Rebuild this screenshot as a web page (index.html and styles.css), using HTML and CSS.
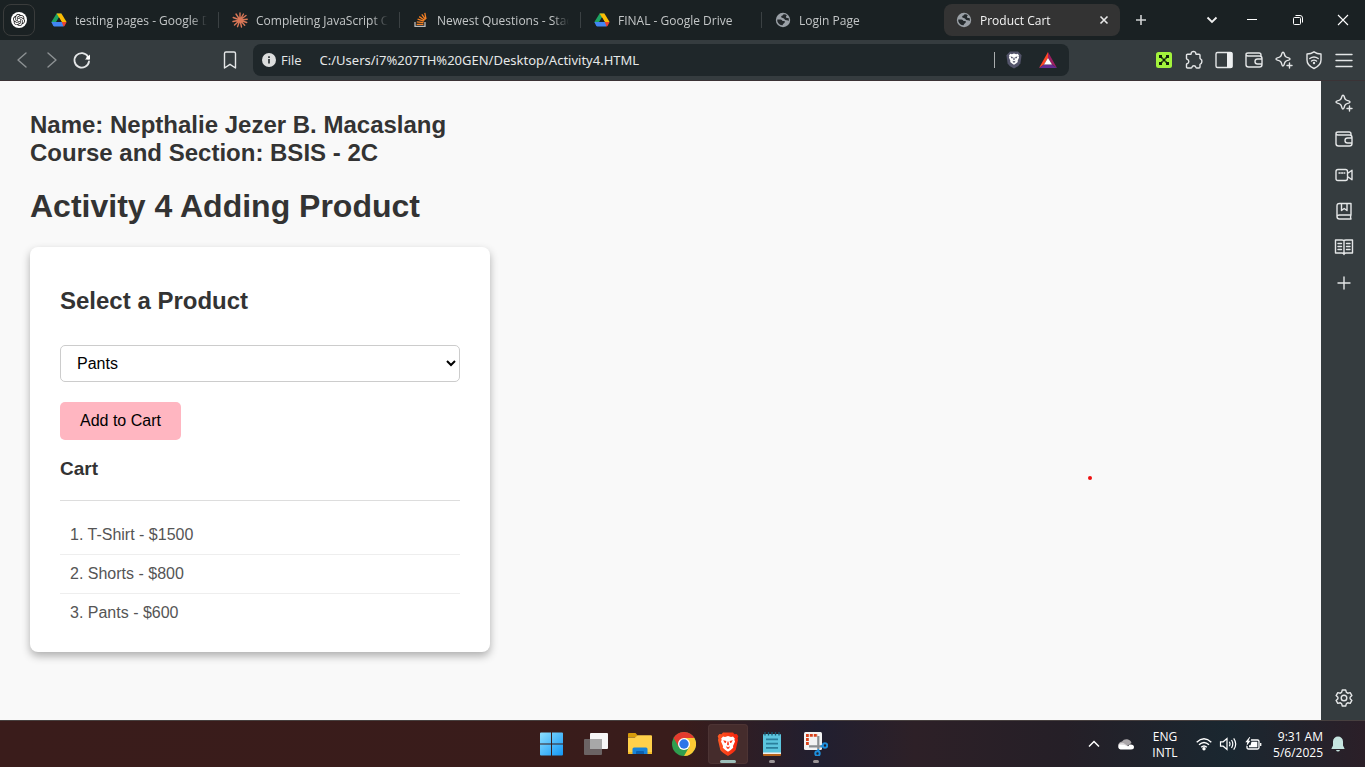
FILE: index.html
```html
<!DOCTYPE html>
<html lang="en">
<head>
<meta charset="utf-8">
<title>Product Cart</title>
<link rel="stylesheet" href="styles.css">
</head>
<body>
<svg class="defs" aria-hidden="true">
  <symbol id="drive" viewBox="0 0 16 16">
    <path fill="#1ea362" d="M5.6 1.5h4.8L5.5 9.6 3.1 14.2.4 9.9z"/>
    <path fill="#fbbc04" d="M5.6 1.5h4.8l5.2 8.4h-4.9z"/>
    <path fill="#4285f4" d="M.4 9.9h12.3l-.2 4.6H3.4q-.8 0-1.200-.8z"/>
    <path fill="#ea4335" d="M10.700 9.900h4.900l-1.900 3.800q-.4.800-1.200.800z"/>
    <path fill="#1a2123" d="M8 5.500l2.700 4.400H5.300z"/>
  </symbol>
  <symbol id="globe" viewBox="0 0 16 16">
    <circle cx="8" cy="8" r="7.200" fill="#9aa0a6"/>
    <path fill="#24292c" d="M2.300 7.600h3.200q1.700 0 2 1.500h2.200q.6 1.800-1 2.300-.9.300-1.100 1.900-3.700.2-5.300-4zM8.200 2.400q-.2 1.400-2 1.700-.4 1.900 1.500 2 1.500.1 2 1.300.5.900 1.900.8 1.300-.2 2.100.9.400-1.600-.2-3.200h-1.500q-1 0-1-1.200 0-1 .9-1.500-1.800-1.300-3.700-.8z"/>
  </symbol>
  <symbol id="sparkle" viewBox="0 0 20 20">
    <path class="line" d="M9 2.200q.8 0 1.100 1.100c.8 3.200 1.400 3.800 4.600 4.600q1.300.4 1.300 1.100t-1.300 1.100c-3.200.8-3.800 1.400-4.600 4.600q-.3 1.300-1.100 1.300t-1.100-1.300c-.8-3.200-1.400-3.800-4.600-4.600Q2 9.800 2 9t1.300-1.100c3.200-.8 3.800-1.400 4.600-4.600Q8.200 2.200 9 2.200z"/>
    <path class="halo" d="M15.500 12v7M12 15.500h7"/>
    <path class="line" d="M15.500 13v5M13 15.500h5"/>
  </symbol>
  <symbol id="wallet" viewBox="0 0 20 20">
    <path class="line" d="M2 5v9.500A2.500 2.500 0 0 0 4.500 17h11a2.500 2.500 0 0 0 2.500-2.500v-6A2.500 2.500 0 0 0 15.500 6H4a2 1.500 0 0 1 0-3h11q2 0 2 2v1M18 9h-4.500a2.500 2.500 0 0 0 0 5H18"/>
  </symbol>
  <symbol id="lion" viewBox="0 0 20 22">
    <path fill="#fff" d="M5 3.500l2 .6L10 3l3 1.100 2-.6 1.900 2.300-.6 1 .7 1.700-2 4.600.2 1.700-2.500 2.100L10 18.800l-2.700-1.900-2.500-2.100.2-1.700L3 8.500l.7-1.700-.6-1z"/>
    <path class="lionmark" d="M5.200 7.300l3.200.6-.6 2.200-1.200-.4zM14.800 7.300l-3.200.6.600 2.200 1.200-.4zM8 13.300l2 1 2-1-.8 2L10 16l-1.200-.7zM9.500 8.500h1l.5 3-1 1-1-1z"/>
  </symbol>
</svg>

<header class="browser">
  <div class="tabs">
    <button class="pinned" aria-label="ChatGPT">
      <svg width="16" height="16" viewBox="0 0 32 32"><circle cx="16" cy="16" r="16" fill="#fff"/><path transform="translate(4 4)" fill="#1b1b1b" d="M22.2819 9.8211a5.9847 5.9847 0 0 0-.5157-4.9108 6.0462 6.0462 0 0 0-6.5098-2.9A6.0651 6.0651 0 0 0 4.9807 4.1818a5.9847 5.9847 0 0 0-3.9977 2.9 6.0462 6.0462 0 0 0 .7427 7.0966 5.98 5.98 0 0 0 .511 4.9107 6.051 6.051 0 0 0 6.5146 2.9001A5.9847 5.9847 0 0 0 13.2599 24a6.0557 6.0557 0 0 0 5.7718-4.2058 5.9894 5.9894 0 0 0 3.9977-2.9001 6.0557 6.0557 0 0 0-.7475-7.0729zm-9.022 12.6081a4.4755 4.4755 0 0 1-2.8764-1.0408l.1419-.0804 4.7783-2.7582a.7948.7948 0 0 0 .3927-.6813v-6.7369l2.02 1.1686a.071.071 0 0 1 .038.052v5.5826a4.504 4.504 0 0 1-4.4945 4.4944zm-9.6607-4.1254a4.4708 4.4708 0 0 1-.5346-3.0137l.142.0852 4.783 2.7582a.7712.7712 0 0 0 .7806 0l5.8428-3.3685v2.3324a.0804.0804 0 0 1-.0332.0615L9.74 19.9502a4.4992 4.4992 0 0 1-6.1408-1.6464zM2.3408 7.8956a4.485 4.485 0 0 1 2.3655-1.9728V11.6a.7664.7664 0 0 0 .3879.6765l5.8144 3.3543-2.0201 1.1685a.0757.0757 0 0 1-.071 0l-4.8303-2.7865A4.504 4.504 0 0 1 2.3408 7.872zm16.5963 3.8558L13.1038 8.364 15.1192 7.2a.0757.0757 0 0 1 .071 0l4.8303 2.7913a4.4944 4.4944 0 0 1-.6765 8.1042v-5.6772a.79.79 0 0 0-.407-.667zm2.0107-3.0231l-.142-.0852-4.7735-2.7818a.7759.7759 0 0 0-.7854 0L9.409 9.2297V6.8974a.0662.0662 0 0 1 .0284-.0615l4.8303-2.7866a4.4992 4.4992 0 0 1 6.6802 4.66zM8.3065 12.863l-2.02-1.1638a.0804.0804 0 0 1-.038-.0567V6.0742a4.4992 4.4992 0 0 1 7.3757-3.4537l-.142.0805L8.704 5.459a.7948.7948 0 0 0-.3927.6813zm1.0976-2.3654l2.602-1.4998 2.6069 1.4998v2.9994l-2.5974 1.4997-2.6067-1.4997Z"/></svg>
    </button>
    <button class="tab"><svg class="favicon"><use href="#drive"/></svg><span class="title">testing pages - Google D</span></button>
    <button class="tab"><svg class="favicon" viewBox="0 0 16 16"><path stroke="#d97757" stroke-width="1.4" stroke-linecap="round" d="M8 8V1M8 8l3.500-6M8 8l6-4.500M8 8l7.200-.7M8 8l6.700 2.500M8 8l4.700 5.300M8 8l1.500 7M8 8l-2.500 6.700M8 8l-5.500 5M8 8l-7 1.500M8 8L1.200 5.500M8 8L4 2"/></svg><span class="title">Completing JavaScript Co</span></button>
    <button class="tab"><svg class="favicon" viewBox="0 0 16 16" fill="none" stroke-width="1.3"><path stroke="#bcbbbb" d="M2 10v4.400h10V10"/><path stroke="#f48024" d="M3.600 12.300h6.800M3.800 9.800l6.700.8M4.600 7.200l6.300 2M6.200 4.600l5.500 3.600M8.800 2.400l3.800 5.100M11.800.8l1.200 6.200"/></svg><span class="title">Newest Questions - Stack</span></button>
    <button class="tab"><svg class="favicon"><use href="#drive"/></svg><span class="title">FINAL - Google Drive</span></button>
    <button class="tab last"><svg class="favicon"><use href="#globe"/></svg><span class="title">Login Page</span></button>
    <button class="tab active"><svg class="favicon"><use href="#globe"/></svg><span class="title">Product Cart</span>
      <svg width="16" height="16" viewBox="0 0 16 16"><path stroke="#e8e8e8" stroke-width="1.6" d="M4.500 4.500l7 7M11.500 4.500l-7 7"/></svg></button>
    <button class="newtab" aria-label="New tab"><svg width="14" height="14" viewBox="0 0 14 14"><path stroke="#d0d2d3" stroke-width="1.6" d="M7 2v10M2 7h10"/></svg></button>
    <div class="window-controls">
      <button class="search-tabs" aria-label="Search tabs"><svg width="14" height="14" viewBox="0 0 14 14" fill="none"><path stroke="#f0f0f0" stroke-width="1.8" d="M2.500 4.500L7 9l4.500-4.500"/></svg></button>
      <button aria-label="Minimize"><svg width="12" height="12" viewBox="0 0 12 12"><path stroke="#fff" d="M1 5.500h10"/></svg></button>
      <button aria-label="Restore"><svg width="12" height="12" viewBox="0 0 12 12" fill="none" stroke="#fff"><rect x="1.500" y="3.500" width="7" height="7" rx="1"/><path d="M3.500 1.500H8a2.500 2.500 0 0 1 2.500 2.500v4.500"/></svg></button>
      <button aria-label="Close"><svg width="12" height="12" viewBox="0 0 12 12"><path stroke="#fff" stroke-width="1.1" d="M1 1l10 10M11 1L1 11"/></svg></button>
    </div>
  </div>

  <div class="toolbar">
    <button class="tool" aria-label="Back"><svg class="dim" viewBox="0 0 20 20"><path class="line" d="M14 3l-8 7 8 7"/></svg></button>
    <button class="tool" aria-label="Forward"><svg class="dim" viewBox="0 0 20 20"><path class="line" d="M6 3l8 7-8 7"/></svg></button>
    <button class="tool" aria-label="Reload"><svg viewBox="0 0 20 20"><path class="line thick" d="M16 6.500A7.300 7.300 0 1 0 17 11.500"/><path fill="#fff" d="M18 4.500v5h-5z"/><circle cx="16.200" cy="7.700" r="1.800" fill="#fff"/></svg></button>
    <div class="address-group">
      <button class="tool" aria-label="Bookmark this page"><svg viewBox="0 0 20 20"><path class="line" d="M4.500 3.500Q4.500 2 6 2h8q1.500 0 1.500 1.500V18L10 14.300 4.500 18z"/></svg></button>
      <div class="address">
        <svg width="14" height="14" viewBox="0 0 14 14"><circle cx="7" cy="7" r="7" fill="#dcdddd"/><path fill="#20272a" d="M6.200 6h1.600v4.600H6.200zM6.200 3.300h1.600v1.600H6.200z"/></svg>
        <label for="url">File</label>
        <input id="url" type="text" value="C:/Users/i7%207TH%20GEN/Desktop/Activity4.HTML">
        <span class="divider"></span>
        <button class="badge" aria-label="Brave Shields"><svg width="16" height="18" viewBox="0 0 20 22"><path fill="#54556b" d="M5 .5h10l4.500 4.500-1.500 10Q16 19 10 21.500 4 19 2 15L.5 5z"/><use href="#lion" width="20" height="20"/></svg></button>
        <button class="badge" aria-label="Brave Rewards"><svg width="18" height="16" viewBox="0 0 18 16"><path fill="#ff4724" d="M9 0L0 16l5-3.500L9 6z"/><path fill="#9e1f63" d="M9 0l9 16-5-3.500L9 6z"/><path fill="#662d91" d="M0 16h18l-5-3.500H5z"/><path fill="#fff" d="M9 6l4 6.500H5z"/></svg></button>
      </div>
    </div>
    <button class="tool" aria-label="Extension"><svg class="plain" viewBox="0 0 16 16"><rect width="16" height="16" rx="2.500" fill="#a3f33c"/><path fill="#10200a" d="M3 3h3v3H3zM10 3h3v3h-3zM6.500 6.500h3v3h-3zM3 10h3v3H3zM10 10h3v3h-3zM5.200 5.200h1.600v1.600H5.200zM9.200 5.200h1.600v1.600H9.200zM5.200 9.200h1.600v1.600H5.200zM9.200 9.200h1.600v1.600H9.200z"/></svg></button>
    <button class="tool" aria-label="Extensions"><svg viewBox="0 0 20 20"><path class="line" d="M3.500 4.200h3.300c.4 0 .5-.3.400-.7-.4-2.700 5-2.700 4.600 0-.1.4 0 .7.400.7H15q1 0 1 1v3c0 .6.300.6.800.9 1.900 1 1.200 4.600-.8 5.200V17q0 1-1 1h-2.400c-.6 0-.7-.3-.8-.9-.4-1.800-3.400-1.800-3.800 0-.1.6-.2.9-.8.9H3.500q-1 0-1-1v-2.500c0-.6.3-.6.8-.8 2-.8 2-3.600 0-4.400-.5-.2-.8-.2-.8-.8V5.200q0-1 1-1z"/></svg></button>
    <button class="tool" aria-label="Side panel"><svg viewBox="0 0 20 20"><rect class="line" x="2" y="2.500" width="16" height="15" rx="1.500"/><path fill="#eef0f1" d="M13 2h4q1.500 0 1.500 1.500v13q0 1.500-1.500 1.500h-4z"/></svg></button>
    <button class="tool" aria-label="Wallet"><svg><use href="#wallet"/></svg></button>
    <button class="tool" aria-label="Leo AI"><svg><use href="#sparkle"/></svg></button>
    <button class="tool" aria-label="VPN"><svg viewBox="0 0 20 20"><path class="line" d="M10 1.800q3 2 7 2.200v6q0 5.500-7 8.500-7-3-7-8.500V4q4-.2 7-2.200z"/><path class="line" d="M5.800 8.500q4.200-3 8.400 0M7.500 11q2.500-1.800 5 0"/><circle cx="10" cy="13" r="1.200" fill="#e4e6e7"/></svg></button>
    <button class="tool" aria-label="Menu"><svg viewBox="0 0 20 20"><path class="line" d="M2 4.500h16M2 10.500h16M2 16.500h16"/></svg></button>
  </div>
</header>

<div class="middle">
  <main class="page">
    <h2>Name: Nepthalie Jezer B. Macaslang<br>Course and Section: BSIS - 2C</h2>
    <h1>Activity 4 Adding Product</h1>
    <section class="card">
      <h2><label for="product">Select a Product</label></h2>
      <select id="product">
        <option>T-Shirt</option>
        <option>Shorts</option>
        <option selected>Pants</option>
      </select>
      <button class="add">Add to Cart</button>
      <h3>Cart</h3>
      <ul class="cart">
        <li>1. T-Shirt - $1500</li>
        <li>2. Shorts - $800</li>
        <li>3. Pants - $600</li>
      </ul>
    </section>
    <span class="pointer"></span>
  </main>
  <nav class="sidebar">
    <button class="side" aria-label="Leo AI"><svg><use href="#sparkle"/></svg></button>
    <button class="side" aria-label="Wallet"><svg><use href="#wallet"/></svg></button>
    <button class="side" aria-label="Talk"><svg viewBox="0 0 20 20"><path class="line" d="M4 4.500h7.500Q13.500 4.500 13.500 6.500v7q0 2-2 2H4q-2 0-2-2v-7q0-2 2-2zM13.500 8.500L18 5.200v9.600l-4.500-3.300"/><path class="line" d="M5 8h1.200M7.600 8h1.200M10.200 8h.6"/></svg></button>
    <button class="side" aria-label="Bookmarks"><svg viewBox="0 0 20 20"><path class="line" d="M17 14V2.500H5.500Q3 2.500 3 5v10.500Q3 18 5.500 18H17M17 14H5.500Q3 14 3 16M17 14q-1 2 0 4M7.500 2.500v7l2.700-2 2.800 2v-7"/></svg></button>
    <button class="side" aria-label="Reading list"><svg viewBox="0 0 20 20"><path class="line" d="M1.500 3H8q2 0 2 1 0-1 2-1h6.500v13H12q-2 0-2 1.500Q10 16 8 16H1.500zM10 4v13M4 6.500h3.500M4 9.500h3.500M4 12.500h3.500M12.500 6.500H16M12.500 9.500H16M12.500 12.500H16"/></svg></button>
    <button class="side" aria-label="Add to sidebar"><svg viewBox="0 0 20 20"><path class="line" d="M10 4v12M4 10h12"/></svg></button>
    <button class="side settings" aria-label="Settings"><svg viewBox="0 0 20 20"><path class="line" d="M8.300 2h3.400l.7 2.400 1.300.8 2.500-.6 1.700 3-1.800 1.700v1.400l1.800 1.700-1.700 3-2.500-.6-1.300.8-.7 2.400H8.300l-.7-2.400-1.300-.8-2.500.6-1.700-3 1.800-1.700V9.300L2.100 7.600l1.700-3 2.500.6 1.300-.8z"/><circle class="line" cx="10" cy="10" r="2.800"/></svg></button>
  </nav>
</div>

<footer class="taskbar">
  <div class="apps">
    <button class="app" aria-label="Start"><svg viewBox="0 0 24 24"><defs><linearGradient id="win" x2="1" y2="1" gradientUnits="userSpaceOnUse" x1="0" y1="0" gradientTransform="scale(24)"><stop stop-color="#8fe0ff"/><stop offset="1" stop-color="#0e94f5"/></linearGradient></defs><path fill="url(#win)" d="M0 1.500Q0 .5 1 .5h10v11H0zM12 .5h10q1 0 1 1v10H12zM0 12.500h11v11H1q-1 0-1-1zM12 12.500h11v10q0 1-1 1H12z"/></svg></button>
    <button class="app" aria-label="Task view"><svg viewBox="0 0 24 24"><rect x="6" y="1" width="18" height="16" rx="1" fill="#f6f6f6"/><rect x="0" y="7" width="18" height="16" rx="1" fill="#6b6364"/><path fill="#a8a8a8" d="M6 7h12v10H6z"/></svg></button>
    <button class="app" aria-label="File Explorer"><svg viewBox="0 0 24 24"><path fill="#d79b0b" d="M0 2q0-1 1-1h6.500l2 2.200-1.500 2H0z"/><path fill="#ffd04a" d="M0 5.500h7l2.500-2.300H23q1 0 1 1V22H0z"/><path fill="#f5bb27" d="M0 20h24v1.500q0 .5-.5.5H.5q-.5 0-.5-.5z"/><path fill="#1883d8" d="M4.500 22v-5q0-1.500 1.500-1.500h12q1.500 0 1.500 1.500v5z"/><path fill="#0c5fae" d="M8 22v-2q0-1 1-1h6q1 0 1 1v2z"/></svg></button>
    <button class="app" aria-label="Google Chrome"><svg viewBox="0 0 24 24"><circle cx="12" cy="12" r="12" fill="#2f9e4f"/><path fill="#e33b2e" d="M1.600 6A12 12 0 0 1 22.400 6H12L6.800 15z"/><path fill="#fcc934" d="M22.400 6A12 12 0 0 1 12 24l5.200-9L12 6z"/><circle cx="12" cy="12" r="6" fill="#fff"/><circle cx="12" cy="12" r="4.700" fill="#2a75e8"/></svg></button>
    <button class="app current" aria-label="Brave"><svg viewBox="0 0 24 24"><defs><linearGradient id="bravefill"><stop stop-color="#ff5a24"/><stop offset="1" stop-color="#f4200b"/></linearGradient></defs><path fill="url(#bravefill)" d="M7 .5h10l1.500 1.800 2.200-.2 1.600 2.200-.7 2L22 8l-2.300 10Q18 20.500 12 24 6 20.500 4.300 18L2 8l.4-1.700-.7-2 1.600-2.200 2.200.2z"/><g class="red"><use href="#lion" x="2" y="1" width="20" height="22"/></g></svg></button>
    <button class="app open" aria-label="Notepad"><svg viewBox="0 0 24 24"><path fill="#b9651c" d="M3 20h18v3q0 1-1 1H4q-1 0-1-1z"/><path fill="#f0efed" d="M3 19h18v3H3z"/><path fill="#5cc5de" d="M3 3q0-1 1-1h16q1 0 1 1v17.500H3z"/><path fill="#2a7f9c" d="M6 6.500h12v1.800H6zM6 10.800h12v1.800H6zM6 15h12v1.800H6z"/><path stroke="#17566e" stroke-width="1.3" d="M5 0v3.500M8.500 0v3.500M12 0v3.500M15.500 0v3.500M19 0v3.500"/></svg></button>
    <button class="app open" aria-label="Snipping Tool"><svg viewBox="0 0 24 24"><rect width="18" height="18" rx="1.500" fill="#f3f3f3"/><path fill="none" stroke="#d8411a" stroke-width="2.800" stroke-dasharray="3 1" d="M3.400 13V3.400H14"/><path stroke="#8b8e91" stroke-width="2.200" d="M14.300 4v13M5 14.300h13"/><g fill="none" stroke="#1e8fdc" stroke-width="2"><circle cx="21" cy="13.500" r="2.200"/><circle cx="13.500" cy="21.500" r="2.200"/><path d="M14.300 17v2.500M16.500 14.300H19"/></g></svg></button>
  </div>
  <div class="tray">
    <button class="tray-item" aria-label="Show hidden icons"><svg width="14" height="14" viewBox="0 0 14 14" fill="none"><path stroke="#fff" stroke-width="1.5" d="M2 9.500l5-5 5 5"/></svg></button>
    <button class="tray-item" aria-label="OneDrive"><svg width="18" height="14" viewBox="0 0 18 14"><path fill="#a9a5a8" d="M1.200 9A4.500 4.500 0 0 1 5 4.500 5.300 5.300 0 0 1 14.500 6l-6 4z"/><path fill="#d8d5d7" d="M1.500 7.500q3-3 6.500-.5l5 3.500-10-.5z"/><path fill="#fff" d="M3.500 12.500a2.700 2.700 0 0 1-1-5l5 .5 3.500 1.500 1.500-2q4.500-.5 4.500 2.500 0 2.500-3 2.500z"/></svg></button>
    <button class="lang">ENG<br>INTL</button>
    <button class="status" aria-label="Network, volume and battery">
      <svg width="16" height="16" viewBox="0 0 16 16" fill="none" stroke="#fff" stroke-width="1.4"><path d="M.7 6.200q7.300-6.700 14.600 0M3 8.700q5-4.600 10 0M5.200 11.200q2.800-2.600 5.600 0"/><circle cx="8" cy="12.700" r="1" fill="#fff"/></svg>
      <svg width="18" height="16" viewBox="0 0 18 16" fill="none" stroke="#fff" stroke-width="1.2"><path d="M1.500 5.800h2.700L8 2.500v11l-3.800-3.300H1.500zM10.300 5.800q1.400 2.200 0 4.400M12.500 4q2.600 4 0 8M14.700 2.300q4 5.700 0 11.400"/></svg>
      <svg width="18" height="16" viewBox="0 0 18 16" fill="none" stroke="#fff" stroke-width="1.3"><path d="M7 4h6.500Q15 4 15 5.500v6q0 1.500-1.500 1.500h-9Q3 13 3 11.500V10M16.700 7v3"/><path fill="#fff" stroke="none" d="M7.500 5.700h5.800v5.600H5V9.200h1.500zM5.500 1L1.300 6.300h2L2.500 10l4-5.200h-2L6.200 1z"/></svg>
    </button>
    <button class="clock">9:31 AM<br>5/6/2025</button>
    <button class="bell" aria-label="Notifications"><svg width="14" height="16" viewBox="0 0 14 16"><path fill="#c6e4e0" d="M7 .5a5 5 0 0 1 5 5v4l1.500 3q0 .5-.5.5H1q-.5 0-.5-.5l1.500-3v-4a5 5 0 0 1 5-5zM5 14h4q-.5 1.500-2 1.500T5 14z"/></svg></button>
  </div>
</footer>
</body>
</html>
```
FILE: styles.css
```css
* { box-sizing: border-box; }

body {
  margin: 0;
  min-height: 100vh;
  display: flex;
  flex-direction: column;
  font-family: "Liberation Sans", Arial, sans-serif;
  background: #f9f9f9;
}

button {
  border: 0;
  padding: 0;
  background: none;
  font: inherit;
  color: inherit;
}

svg { display: block; flex: none; }
.defs { position: absolute; width: 0; height: 0; }

.line {
  fill: none;
  stroke: #e4e6e7;
  stroke-width: 1.4;
  stroke-linecap: round;
  stroke-linejoin: round;
}
.thick { stroke-width: 1.8; }
.halo { stroke: #353c3f; stroke-width: 3; }
.dim { opacity: 0.5; }
.lionmark { fill: var(--mark, #45465c); }
.red { --mark: #ff3a1a; }

/* Browser chrome */
.browser {
  font: 12px "Open Sans", "Noto Sans", sans-serif;
  color: #c3c6c7;
  border-bottom: 1px solid #3b3336;
}

.tabs {
  display: flex;
  align-items: center;
  height: 40px;
  padding-left: 3px;
  background: #1a2123;
}

.pinned {
  width: 32px;
  height: 32px;
  margin-right: 4px;
  display: grid;
  place-items: center;
  border: 1px solid #3a3c3c;
  border-radius: 8px;
}

.tab {
  position: relative;
  display: flex;
  align-items: center;
  flex: 0 1 176px;
  min-width: 0;
  height: 32px;
  margin-right: 5px;
  padding: 0 8px 0 12px;
  gap: 8px;
  text-align: left;
  border-radius: 8px;
}
.tab::after {
  content: "";
  position: absolute;
  right: -4px;
  top: 8px;
  width: 1px;
  height: 16px;
  background: #3b4143;
}
.tab.last::after, .tab.active::after { display: none; }
.tab.active { background: #333333; color: #f4f4f4; }

.favicon { width: 16px; height: 16px; }

.title {
  flex: 1;
  overflow: hidden;
  white-space: nowrap;
  mask-image: linear-gradient(to right, #000 calc(100% - 16px), transparent);
}

.newtab { padding: 8px; margin-left: 1px; }

.window-controls { display: flex; margin-left: auto; }
.window-controls button {
  width: 46px;
  height: 40px;
  display: grid;
  place-items: center;
}
.window-controls button:last-child { width: 44px; }
.window-controls .search-tabs { width: 34px; }

.toolbar {
  display: flex;
  align-items: center;
  height: 40px;
  padding: 0 6px 0 7px;
  background: #353c3f;
}

.tool, .side {
  display: grid;
  place-items: center;
}
.tool { width: 30px; height: 30px; }
.tool svg, .side svg { width: 20px; height: 20px; }
.tool .plain { width: 16px; height: 16px; }

.address-group {
  flex: 1;
  display: flex;
  align-items: center;
  gap: 8px;
  margin: 0 80px 0 118px;
}

.address {
  flex: 1;
  display: flex;
  align-items: center;
  height: 32px;
  padding: 0 4px 0 9px;
  border-radius: 8px;
  background: #1f272a;
  font-size: 13px;
  color: #e6e8e8;
}
.address label { margin: 0 18px 0 5px; }
.address input {
  flex: 1;
  min-width: 0;
  padding: 0;
  border: 0;
  outline: 0;
  background: none;
  font: 13px "Noto Sans", "Open Sans", sans-serif;
  color: inherit;
}
.divider { width: 1px; height: 16px; margin-right: 2px; background: #a9adae; }
.badge { width: 34px; display: grid; place-items: center; }

/* Page and sidebar */
.middle { flex: 1; display: flex; }

.page {
  position: relative;
  flex: 1;
  padding: 30px;
  color: #333333;
}

h1, h2, h3 { margin: 0; }
h1 { margin: 21px 0 23px; font-size: 32px; line-height: 36px; }
h2 { font-size: 24px; line-height: 28px; }
h3 { margin: 18px 0 20px; font-size: 19px; line-height: 22px; }

.card {
  max-width: 460px;
  padding: 40px 30px 20px;
  border-radius: 8px;
  background: #ffffff;
  box-shadow: 0 4px 8px rgba(0, 0, 0, 0.3);
}

.card select {
  display: block;
  width: 100%;
  margin: 30px 0 20px;
  padding: 8px 12px;
  border: 1px solid #cccccc;
  border-radius: 5px;
  background: #ffffff;
  font: 16px "Liberation Sans", Arial, sans-serif;
  color: #000000;
}

.add {
  display: block;
  padding: 10px 20px;
  border-radius: 5px;
  background: #ffb6c1;
  font-size: 16px;
  line-height: 18px;
  color: #000000;
}

.cart {
  margin: 0;
  padding: 15px 0 0;
  border-top: 1px solid #dddddd;
  list-style: none;
}
.cart li {
  padding: 10px;
  border-bottom: 1px solid #eeeeee;
  font-size: 16px;
  line-height: 18px;
  color: #555555;
}
.cart li:last-child { border-bottom: 0; }

.pointer {
  position: absolute;
  left: 1088px;
  top: 395px;
  width: 4px;
  height: 4px;
  border-radius: 50%;
  background: #ee1111;
}

.sidebar {
  width: 44px;
  display: flex;
  flex-direction: column;
  padding: 4px 3px 4px 5px;
  background: #353c3f;
}
.side { width: 100%; height: 36px; }
.settings { margin-top: auto; }

/* Taskbar */
.taskbar {
  display: grid;
  grid-template-columns: 1fr auto 1fr;
  align-items: center;
  height: 47px;
  padding-left: 2px;
  border-top: 1px solid #47403f;
  background: linear-gradient(to right, #3a1c1b 0%, #391c1b 50%, #211f30 60%, #2d2027 67%, #251f27 78%, #1a2730 90%, #2b1f28 100%);
  font: 12px "Open Sans", "Noto Sans", sans-serif;
  color: #ffffff;
}

.apps {
  grid-column: 2;
  display: flex;
  gap: 4px;
}
.app {
  position: relative;
  width: 40px;
  height: 40px;
  display: grid;
  place-items: center;
  border-radius: 4px;
}
.app svg { width: 24px; height: 24px; }
.current { background: #452c2c; box-shadow: inset 0 0 0 1px #4d3434; }
.current::after, .open::after {
  content: "";
  position: absolute;
  bottom: 1px;
  left: 17px;
  width: 6px;
  height: 3px;
  border-radius: 2px;
  background: #9a9496;
}
.current::after { left: 12px; width: 16px; background: #9dbfba; }

.tray {
  display: flex;
  align-items: center;
  justify-content: flex-end;
  padding-right: 20px;
  line-height: 16px;
}
.tray-item {
  width: 32px;
  height: 40px;
  display: grid;
  place-items: center;
}
.lang { width: 46px; padding-top: 2px; text-align: center; }
.status {
  display: flex;
  align-items: center;
  gap: 7px;
  margin: 0 4px 0 8px;
}
.clock { width: 57px; padding-top: 1px; text-align: right; }
.bell { margin-left: 8px; }
```
